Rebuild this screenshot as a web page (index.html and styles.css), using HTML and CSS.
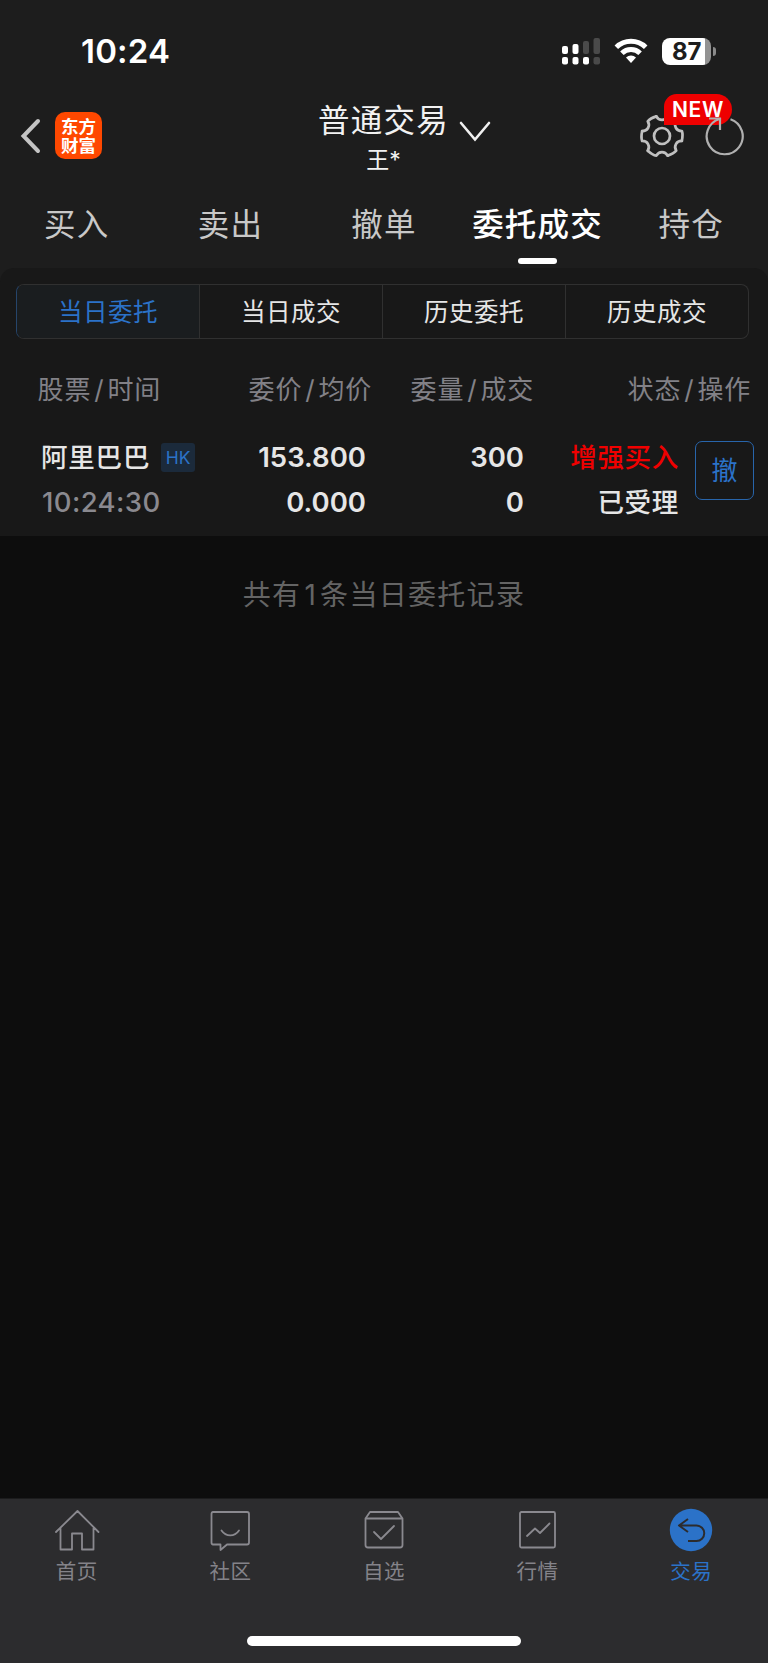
FILE: index.html
```
<!DOCTYPE html>
<html lang="zh-CN">

<head>
    <meta charset="utf-8">
    <title>普通交易</title>
    <link rel="stylesheet" href="styles.css">
</head>

<body>
    <div class="status-bar">
        <span class="time">10:24</span>
        <svg class="signal" width="40" height="28" viewBox="0 0 40 28">
            <g fill="#fff">
                <rect x="1" y="9" width="6" height="8" rx="2" />
                <rect x="11.5" y="7" width="6" height="10" rx="2" />
                <rect x="1" y="20" width="6" height="7.5" rx="2" />
                <rect x="11.5" y="20" width="6" height="7.5" rx="2" />
                <rect x="22" y="20" width="6" height="7.5" rx="2" />
            </g>
            <g fill="#4a4a4a">
                <rect x="22" y="4" width="6" height="13" rx="2" />
                <rect x="32.500" y="1" width="6.500" height="16" rx="2" />
                <rect x="32.500" y="20" width="6.500" height="7.500" rx="2" />
            </g>
        </svg>
        <svg class="wifi" width="34" height="26" viewBox="0 0 34 26" fill="none" stroke="#fff" stroke-width="5">
            <path d="M2.300 9.300A21 21 0 0 1 31.700 9.300" />
            <path d="M7.900 15.200A13 13 0 0 1 26.100 15.200" />
            <path d="M17 25l-5-5.500a7.200 7.200 0 0 1 10 0z" fill="#fff" stroke="none" />
        </svg>
        <div class="battery"><span>87</span></div>
        <div class="battery-cap"></div>
    </div>

    <div class="header">
        <div class="header-left">
            <svg width="22" height="38" viewBox="0 0 22 38" fill="none" stroke="#c4c4c4" stroke-width="4" stroke-linecap="round">
                <path d="M18 4L3.500 19L18 34" />
            </svg>
            <div class="logo"><span>东方</span><span>财富</span></div>
        </div>
        <div class="title">
            <div class="title-main">普通交易</div>
            <div class="title-sub">王*</div>
        </div>
        <svg class="chevron" width="32" height="22" viewBox="0 0 32 22" fill="none" stroke="#f0f0f0" stroke-width="2.600" stroke-linecap="round">
            <path d="M2 2L16 18.500L30 2" />
        </svg>
        <div class="header-right">
            <svg class="gear" width="46" height="46" viewBox="-23 -23 46 46" fill="none" stroke="#c0c0c0" stroke-width="2.700" stroke-linecap="round" stroke-linejoin="round">
                <defs>
                    <path id="tooth" d="M5.650 19.700C3 14.900 -3 14.900 -5.650 19.700Q-9.500 19 -14.200 14.700" />
                </defs>
                <use href="#tooth" />
                <use href="#tooth" transform="rotate(60)" />
                <use href="#tooth" transform="rotate(120)" />
                <use href="#tooth" transform="rotate(180)" />
                <use href="#tooth" transform="rotate(240)" />
                <use href="#tooth" transform="rotate(300)" />
                <circle r="8" />
            </svg>
            <span class="badge">NEW</span>
            <svg class="refresh" width="42" height="42" viewBox="0 0 42 42" fill="none" stroke="#b0b0b0" stroke-width="2.200">
                <path d="M26.500 4.200A18 18 0 1 1 15.500 4" />
                <path d="M5 3.500H16V15" />
            </svg>
        </div>
    </div>

    <div class="tabs">
        <div class="tab">买入</div>
        <div class="tab">卖出</div>
        <div class="tab">撤单</div>
        <div class="tab active">委托成交</div>
        <div class="tab">持仓</div>
    </div>

    <div class="panel">
        <div class="segment">
            <div class="seg active">当日委托</div>
            <div class="seg">当日成交</div>
            <div class="seg">历史委托</div>
            <div class="seg">历史成交</div>
        </div>

        <div class="list-head">
            <span>股票<i>/</i>时间</span>
            <span>委价<i>/</i>均价</span>
            <span>委量<i>/</i>成交</span>
            <span>状态<i>/</i>操作</span>
        </div>

        <div class="order">
            <div class="col stock">
                <div class="name">阿里巴巴<span class="market">HK</span></div>
                <div class="order-time">10:24:30</div>
            </div>
            <div class="col num">
                <div>153.800</div>
                <div>0.000</div>
            </div>
            <div class="col num">
                <div>300</div>
                <div>0</div>
            </div>
            <div class="col state">
                <div class="buy">增强买入</div>
                <div>已受理</div>
            </div>
            <div class="cancel">撤</div>
        </div>
    </div>

    <div class="summary">共有<span>1</span>条当日委托记录</div>

    <div class="bottom-bar">
        <div class="nav">
            <div class="nav-item">
                <svg width="46" height="46" viewBox="0 0 46 46">
                    <path d="M2 24L23.500 3L44.500 24M6.500 20V41.500H18V25.500H28V41.500H39.500V20" />
                </svg>
                <span>首页</span>
            </div>
            <div class="nav-item">
                <svg width="46" height="46" viewBox="0 0 46 46">
                    <path d="M6 4H40Q42 4 42 6V34.500Q42 36.500 40 36.500H20L13.500 42V36.500H6Q4.500 36.500 4.500 34.500V6Q4.500 4 6 4Z" />
                    <path d="M14.500 22.500C19 29 27.500 29 32 22.500" />
                </svg>
                <span>社区</span>
            </div>
            <div class="nav-item">
                <svg width="46" height="46" viewBox="0 0 46 46">
                    <path d="M4.500 10.500L9 4H37L41.500 10.500V37Q41.500 39.500 39 39.500H7Q4.500 39.500 4.500 37ZM4.500 10.500H41.500" />
                    <path d="M13 24L20 31L33 18" />
                </svg>
                <span>自选</span>
            </div>
            <div class="nav-item">
                <svg width="46" height="46" viewBox="0 0 46 46">
                    <rect x="5" y="4" width="35" height="35.500" rx="1.500" />
                    <path d="M12 28L20 20.500L25 25L34.500 15.500" />
                </svg>
                <span>行情</span>
            </div>
            <div class="nav-item active">
                <svg width="46" height="46" viewBox="0 0 46 46">
                    <circle cx="23" cy="22" r="21.200" />
                    <path d="M20 11L11 17.500L20 24M11 17.500H28.500A7.700 7.700 0 0 1 28.500 33H20" />
                </svg>
                <span>交易</span>
            </div>
        </div>
        <div class="home-indicator"></div>
    </div>
</body>

</html>
```
FILE: styles.css
```
* {
    box-sizing: border-box;
}

body {
    margin: 0;
    width: 768px;
    height: 1663px;
    display: flex;
    flex-direction: column;
    background: #0d0d0d;
    color: #e6e6e6;
    font-family: Inter, "Noto Sans CJK SC", sans-serif;
    overflow: hidden;
}

svg {
    display: block;
    flex: none;
}

/* status bar */
.status-bar {
    height: 92px;
    padding: 10px 52px 0 81px;
    display: flex;
    align-items: center;
    background: #1d1d1d;
    color: #fff;
}

.time {
    font-size: 33px;
    font-weight: 600;
    margin-right: auto;
    letter-spacing: 0.2px;
}

.wifi {
    margin: 0 14px 0 13px;
}

.battery {
    width: 49px;
    height: 27px;
    border-radius: 8px;
    background: linear-gradient(to right, #fff 43px, #929292 43px);
    color: #1d1d1d;
    font-size: 24px;
    font-weight: 700;
    line-height: 27px;
    padding-left: 10px;
}

.battery-cap {
    width: 3px;
    height: 9px;
    margin-left: 2px;
    border-radius: 0 4px 4px 0;
    background: #8a8a8a;
}

/* header */
.header {
    height: 92px;
    display: flex;
    background: #1d1d1d;
}

.header-left {
    width: 318px;
    padding: 20px 0 0 20px;
    display: flex;
    align-items: flex-start;
    gap: 13px;
}

.header-left svg {
    margin-top: 5px;
}

.logo {
    width: 47px;
    height: 47px;
    padding-top: 5px;
    border-radius: 10px;
    background: #ff4800;
    color: #fff;
    font-size: 17.5px;
    font-weight: 700;
    line-height: 19px;
    display: flex;
    flex-direction: column;
    align-items: center;
}

.title {
    width: 131px;
    padding-top: 9px;
    text-align: center;
    color: #f2f2f2;
    white-space: nowrap;
}

.title-main {
    font-size: 31.5px;
    line-height: 40px;
    letter-spacing: 1.2px;
}

.title-sub {
    font-size: 23px;
    line-height: 39px;
}

.chevron {
    margin: 29px 0 0 10px;
}

.header-right {
    margin: 21px 22px 0 auto;
    display: flex;
    gap: 19px;
    position: relative;
}

.refresh {
    position: relative;
    margin: 2px 0 0;
}

.badge {
    position: absolute;
    left: 25px;
    top: -19px;
    width: 68px;
    height: 31px;
    border-radius: 13px 16px 16px 0;
    background: #ee0000;
    color: #fff;
    font-size: 21px;
    font-weight: 600;
    line-height: 31px;
    text-align: center;
    letter-spacing: 0.6px;
}

/* tabs */
.tabs {
    height: 84px;
    display: flex;
    background: #1d1d1d;
}

.tab {
    flex: 1;
    display: flex;
    flex-direction: column;
    align-items: center;
    padding-top: 21px;
    font-size: 31.5px;
    line-height: 40px;
    letter-spacing: 1.2px;
    color: #c8c8c8;
    font-weight: 400;
    white-space: nowrap;
}

.tab.active {
    color: #fff;
    font-weight: 500;
}

.tab.active::after {
    content: "";
    width: 39px;
    height: 6px;
    margin-top: 13px;
    border-radius: 3px;
    background: #fff;
}

/* orders */
.panel {
    height: 268px;
    border-radius: 14px 14px 0 0;
    background: #181818;
    /* fills the area behind the rounded corners */
    box-shadow: 0 -14px 0 #1d1d1d;
    clip-path: inset(0);
}

.segment {
    margin: 16px 19px 0 16px;
    height: 55px;
    display: flex;
    border: 1.5px solid #303030;
    border-left-color: #26456b;
    border-radius: 8px;
    overflow: hidden;
}

.seg {
    flex: 1;
    text-align: center;
    font-size: 24.5px;
    line-height: 54px;
    letter-spacing: 0.5px;
    border-left: 1.5px solid #303030;
}

.seg:first-child {
    border-left: 0;
}

.seg.active {
    background: #1a1d1f;
    color: #2b72c8;
}

.list-head {
    margin-top: 31px;
    display: grid;
    grid-template-columns: 161px 211px 162px 217px;
    text-align: right;
    font-size: 26px;
    font-weight: 400;
    line-height: 40px;
    letter-spacing: 0.8px;
    color: #828187;
}

.list-head i {
    font-style: normal;
    margin: 0 3px 0 3px;
}

.order {
    margin-top: 25px;
    height: 101px;
    display: flex;
    align-items: flex-start;
    font-size: 27.5px;
    font-weight: 600;
}

.col {
    line-height: 45px;
    text-align: right;
    white-space: nowrap;
}

.stock {
    width: 208px;
    padding-left: 41px;
    text-align: left;
}

.name {
    display: flex;
    align-items: center;
    font-size: 26.5px;
    font-weight: 500;
    letter-spacing: 0.8px;
}

.market {
    margin-left: 11px;
    width: 34px;
    height: 29px;
    border-radius: 3px;
    background: #1b2a3b;
    color: #2b72c8;
    font-size: 17.5px;
    font-weight: 400;
    line-height: 30px;
    letter-spacing: 0;
    text-align: center;
}

.order-time {
    padding-left: 1px;
    color: #8a898f;
    font-weight: 500;
    letter-spacing: 0.4px;
}

.num {
    width: 158px;
}

.state {
    width: 155px;
    font-size: 26.5px;
    font-weight: 500;
    letter-spacing: 0.7px;
}

.buy {
    color: #f00000;
}

.cancel {
    margin: 6px 0 0 16px;
    width: 59px;
    height: 59px;
    border: 1.5px solid #2865ab;
    border-radius: 7px;
    color: #2b72c8;
    font-size: 26px;
    font-weight: 400;
    line-height: 57px;
    text-align: center;
}

.summary {
    margin-top: 39px;
    text-align: center;
    color: #646464;
    font-size: 28px;
    font-weight: 400;
    line-height: 40px;
    letter-spacing: 1.3px;
}

.summary span {
    margin: 0 3px;
}

/* bottom bar */
.bottom-bar {
    margin-top: auto;
    height: 165px;
    background: #2c2c2e;
    border-top: 1px solid #1c1c1d;
}

.nav {
    display: flex;
    height: 138px;
}

.nav-item {
    flex: 1;
    display: flex;
    flex-direction: column;
    align-items: center;
    padding-top: 9px;
    color: #848389;
    font-size: 20.5px;
    font-weight: 400;
    line-height: 35px;
    letter-spacing: 0.5px;
}

.nav-item svg {
    fill: none;
    stroke: #8a898f;
    stroke-width: 1.8;
    stroke-linecap: round;
    stroke-linejoin: round;
}

.nav-item.active {
    color: #2b72c8;
}

.nav-item.active svg {
    stroke: #2c2c2e;
    stroke-width: 2;
    stroke-linecap: butt;
}

.nav-item.active circle {
    fill: #2b72c8;
    stroke: none;
}

.home-indicator {
    width: 274px;
    height: 10px;
    margin: -1px auto 0;
    border-radius: 5px;
    background: #fff;
}
```
